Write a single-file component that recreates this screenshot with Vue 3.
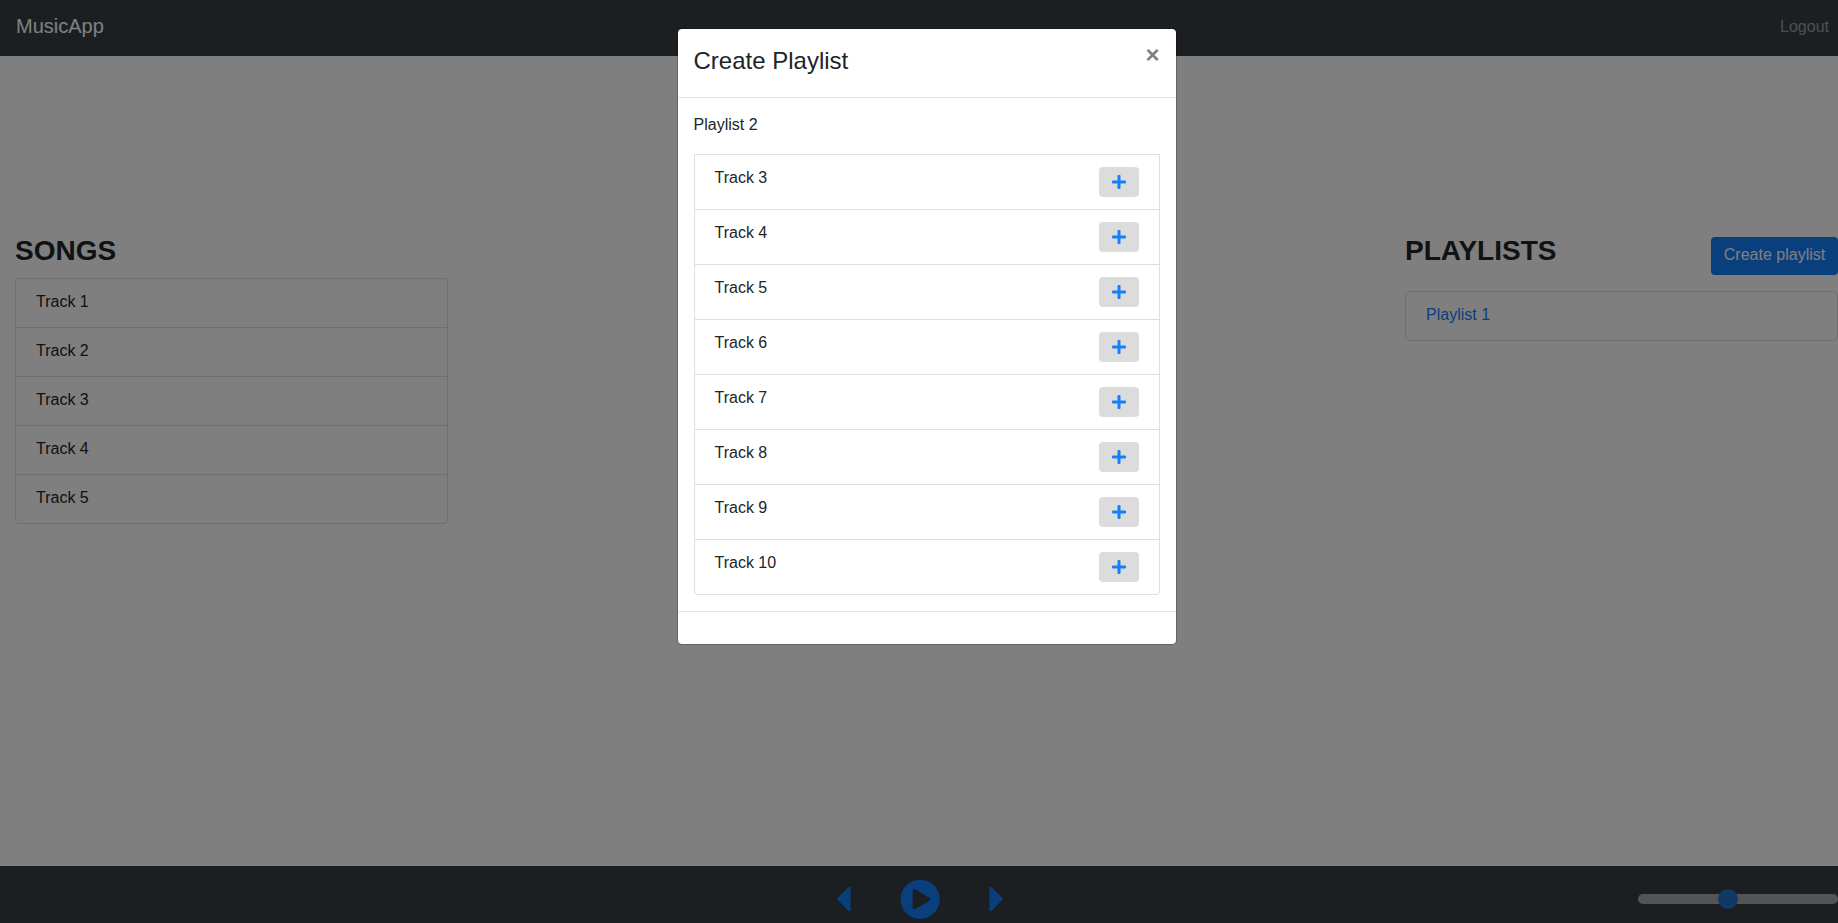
<script setup>
const songs = [1, 2, 3, 4, 5]
const candidates = [3, 4, 5, 6, 7, 8, 9, 10]
</script>

<template>
  <div class="app">
    <nav class="topbar">
      <a class="brand">MusicApp</a>
      <a class="logout">Logout</a>
    </nav>

    <main class="content">
      <section class="panel">
        <h2 class="heading">SONGS</h2>
        <ul class="list">
          <li v-for="n in songs" :key="n">Track {{ n }}</li>
        </ul>
      </section>
      <section class="panel">
        <div class="panel-head">
          <h2 class="heading">PLAYLISTS</h2>
          <button class="create">Create playlist</button>
        </div>
        <ul class="list">
          <li><a class="link">Playlist 1</a></li>
        </ul>
      </section>
    </main>

    <footer class="player">
      <div class="controls">
        <svg class="caret" viewBox="0 0 14 24"><path d="M13.5 1.6v20.8c0 1.4-1.4 2-2.4 1L.7 13.1a1.5 1.5 0 0 1 0-2.2L11.1.6c1-1 2.4-.4 2.4 1z" /></svg>
        <svg class="play" viewBox="0 0 512 512"><path d="M256 8C119 8 8 119 8 256s111 248 248 248 248-111 248-248S393 8 256 8zm115.700 272l-176 101c-15.800 8.800-35.700-2.500-35.700-21V152c0-18.400 19.800-29.800 35.700-21l176 107c16.400 9.200 16.400 32.900 0 42z" /></svg>
        <svg class="caret" viewBox="0 0 14 24"><path d="M.5 22.400V1.600C.5.200 1.900-.4 2.900.6l10.400 10.300a1.500 1.500 0 0 1 0 2.200L2.900 23.400c-1 1-2.400.4-2.400-1z" /></svg>
      </div>
      <div class="volume"><span class="thumb"></span></div>
    </footer>

    <div class="backdrop"></div>

    <div class="modal" role="dialog">
      <header class="modal-head">
        <h4 class="modal-title">Create Playlist</h4>
        <button class="close">×</button>
      </header>
      <div class="modal-body">
        <p class="name">Playlist 2</p>
        <ul class="list picks">
          <li v-for="n in candidates" :key="n">
            <span>Track {{ n }}</span>
            <button class="add">
              <svg viewBox="0 0 14 14"><path d="M5.500 1a1 1 0 0 1 1-1h1a1 1 0 0 1 1 1v4.500H13a1 1 0 0 1 1 1v1a1 1 0 0 1-1 1H8.500V13a1 1 0 0 1-1 1h-1a1 1 0 0 1-1-1V8.500H1a1 1 0 0 1-1-1v-1a1 1 0 0 1 1-1h4.500z" /></svg>
            </button>
          </li>
        </ul>
      </div>
      <footer class="modal-foot"></footer>
    </div>
  </div>
</template>

<style>
body {
  margin: 0;
  overflow: hidden;
}
</style>

<style scoped>
* {
  box-sizing: border-box;
}
.app {
  position: relative;
  height: 923px;
  display: flex;
  flex-direction: column;
  font: 16px/1.5 "Liberation Sans", Arial, sans-serif;
  color: #212529;
  background: #fff;
}
button {
  font: inherit;
  border: 0;
  padding: 0;
}
.topbar {
  height: 56px;
  flex: none;
  display: flex;
  align-items: center;
  justify-content: space-between;
  padding: 0 9px 4px 16px;
  background: #383f45;
}
.brand {
  font-size: 20px;
  line-height: 30px;
  color: #fff;
}
.logout {
  padding-top: 2px;
  color: rgba(255, 255, 255, 0.5);
}
.content {
  flex: 1;
  display: flex;
  justify-content: space-between;
  padding: 177px 0 0 15px;
}
.panel {
  width: 433px;
}
.panel-head {
  display: flex;
  justify-content: space-between;
  align-items: flex-start;
  height: 58px;
}
.heading {
  margin: 0;
  height: 45px;
  font-size: 28px;
  font-weight: 700;
  line-height: 36px;
}
.create {
  height: 38px;
  width: 127px;
  margin-top: 4px;
  padding-bottom: 2px;
  border-radius: 4px;
  background: #147efb;
  color: #fff;
}
.list {
  list-style: none;
  margin: 0;
  padding: 0;
  border: 1px solid #dfdfdf;
  border-radius: 4px;
}
.list li {
  height: 49px;
  padding: 11px 20px;
}
.list li + li {
  border-top: 1px solid #dfdfdf;
}
.list li:first-child {
  height: 48px;
}
.link {
  color: #147efb;
}
.player {
  position: relative;
  flex: none;
  height: 57px;
  display: flex;
  align-items: center;
  justify-content: center;
  padding: 9px 0 0 1.4px;
  background: #383f45;
}
.controls {
  display: flex;
  align-items: center;
  gap: 48.8px;
  fill: #147efb;
}
.caret {
  width: 14px;
  height: 24px;
}
.play {
  width: 40.4px;
  height: 40.4px;
}
.volume {
  position: absolute;
  right: 0;
  top: 28px;
  width: 200px;
  height: 10px;
  border-radius: 5px;
  background: #a7a9ab;
}
.thumb {
  position: absolute;
  left: 80px;
  top: -5px;
  width: 20px;
  height: 20px;
  border-radius: 50%;
  background: #2470c9;
}
.backdrop {
  position: absolute;
  inset: 0;
  background: rgba(0, 0, 0, 0.5);
}
.modal {
  position: absolute;
  left: 676.5px;
  top: 28px;
  width: 500px;
  background: #fff;
  background-clip: padding-box;
  border: 1px solid rgba(0, 0, 0, 0.2);
  border-radius: 5px;
}
.modal-head {
  height: 69px;
  display: flex;
  justify-content: space-between;
  padding: 14px 16px;
  border-bottom: 1px solid #e5e5e5;
}
.modal-title {
  margin: 0;
  font-size: 24px;
  font-weight: 400;
  line-height: 36px;
}
.close {
  height: 24px;
  font-size: 24px;
  font-weight: 700;
  line-height: 24px;
  color: #7f7f7f;
  background: none;
}
.modal-body {
  padding: 15px 16px 16px;
}
.name {
  margin: 0 0 17px;
}
.picks {
  border-radius: 0 0 4px 4px;
}
.picks li {
  display: flex;
  justify-content: space-between;
  height: 55px;
}
.picks li:first-child {
  height: 54px;
}
.add {
  width: 40px;
  height: 30px;
  margin-top: 1px;
  border-radius: 4px;
  background: #dcdcdc;
  display: flex;
  align-items: center;
  justify-content: center;
}
.add svg {
  width: 14px;
  height: 14px;
  fill: #147efb;
}
.modal-foot {
  height: 33px;
  border-top: 1px solid #e5e5e5;
}
</style>
